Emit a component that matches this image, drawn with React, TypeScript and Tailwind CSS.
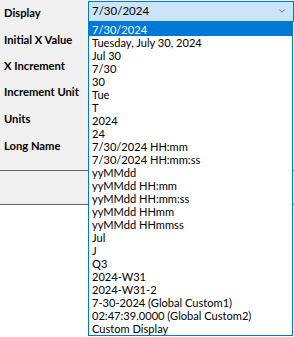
import { ChevronDown } from "lucide-react";

const FIELDS = ["Display", "Initial X Value", "X Increment", "Increment Unit", "Units", "Long Name"];
const ROW_HEIGHTS = ["h-[26px]", "h-[27px]", "h-[26px]", "h-[26px]", "h-[27px]", "h-[27px]"];

const OPTIONS = [
  "7/30/2024",
  "Tuesday, July 30, 2024",
  "Jul 30",
  "7/30",
  "30",
  "Tue",
  "T",
  "2024",
  "24",
  "7/30/2024 HH:mm",
  "7/30/2024 HH:mm:ss",
  "yyMMdd",
  "yyMMdd HH:mm",
  "yyMMdd HH:mm:ss",
  "yyMMdd HHmm",
  "yyMMdd HHmmss",
  "Jul",
  "J",
  "Q3",
  "2024-W31",
  "2024-W31-2",
  "7-30-2024 (Global Custom1)",
  "02:47:39.0000 (Global Custom2)",
  "Custom Display",
];

export default function App() {
  const selected = 0;

  return (
    <div className="relative flex h-[337px] w-[294px] flex-col overflow-hidden bg-white font-['Lato',sans-serif] text-[11px] text-black">
      <div className="flex h-[170px] flex-col bg-[#f0f0f0]">
        {FIELDS.map((label, i) => (
          <div key={label} className={`flex items-center ${ROW_HEIGHTS[i]}`}>
            <span className="w-[88px] whitespace-nowrap pl-1 text-[11.2px] font-bold leading-none">{label}</span>
            {i === 0 ? (
              <div className="mt-[-4px] flex h-[21px] flex-1 items-center border border-[#0078d7] bg-[#cce4f7] pl-[3px] pr-[6px]">
                <span className="flex-1 text-[11.5px] leading-none">{OPTIONS[selected]}</span>
                <ChevronDown className="h-[10px] w-[10px] text-[#404040]" strokeWidth={1.5} />
              </div>
            ) : null}
          </div>
        ))}
      </div>
      <div className="h-[35px] border-y border-[#646464] bg-[#f0f0f0]" />
      <div className="flex-1 bg-white" />

      {/* open dropdown list */}
      <div className="absolute left-[88px] top-[22px] flex w-[205px] flex-col border border-[#0078d7] bg-white">
        {OPTIONS.map((option, i) => (
          <div
            key={option}
            className={`h-[13px] overflow-hidden whitespace-nowrap pl-[3px] text-[11.1px] leading-[13px] ${
              i === selected ? "bg-[#0078d7] text-white" : "text-black"
            }`}
          >
            {option}
          </div>
        ))}
      </div>
    </div>
  );
}
